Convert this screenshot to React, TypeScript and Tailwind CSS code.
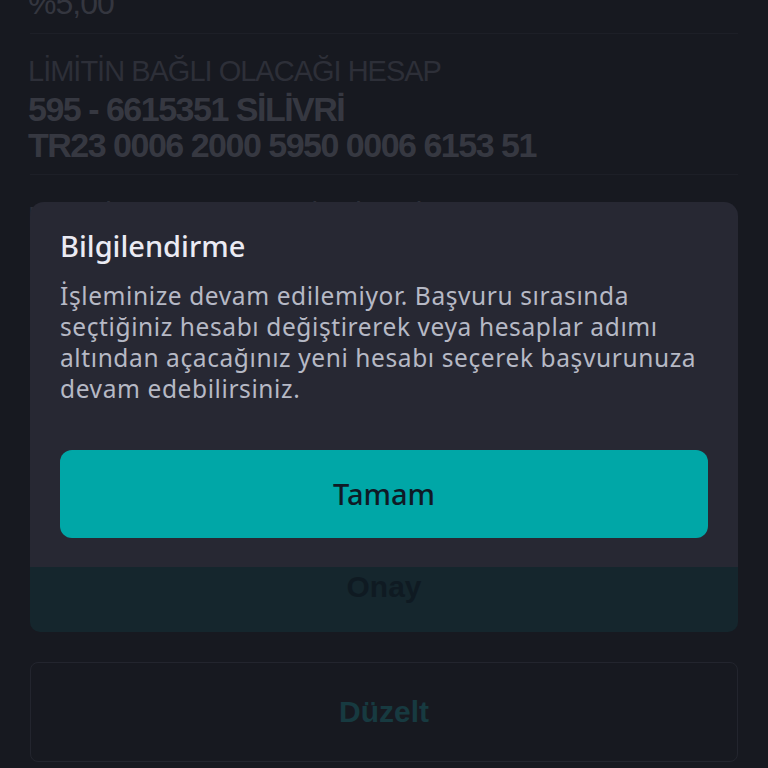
const sans = { fontFamily: '"Liberation Sans", Arial, sans-serif' };

const message = [
  "İşleminize devam edilemiyor. Başvuru sırasında",
  "seçtiğiniz hesabı değiştirerek veya hesaplar adımı",
  "altından açacağınız yeni hesabı seçerek başvurunuza",
  "devam edebilirsiniz.",
];

const Background = () => (
  <div className="flex flex-col px-[28px]" style={sans}>
    <div className="mx-[2px] h-[34px] border-b border-[#1d1f27]">
      <p className="ml-[-2px] mt-[-15px] text-[32px] leading-[36px] tracking-[-1px] text-[#34363f]">%5,00</p>
    </div>
    <div className="mx-[2px] flex flex-col border-b border-[#1d1f27] pt-[20px] pb-[11px]">
      <p className="ml-[-2px] text-[29px] leading-[34px] tracking-[-1px] text-[#2d2f38]">LİMİTİN BAĞLI OLACAĞI HESAP</p>
      <p className="ml-[-2px] mt-[3px] text-[34px] font-bold leading-[36px] tracking-[-1.5px] text-[#363841]">595 - 6615351 SİLİVRİ</p>
      <p className="ml-[-2px] text-[34px] font-bold leading-[36px] tracking-[-1.5px] text-[#363841]">TR23 0006 2000 5950 0006 6153 51</p>
    </div>
    <p className="pt-[25px] text-[29px] leading-[34px] tracking-[-1px] text-[#2d2f38]">KREDİ KARTI ÜRÜN BİLGİLERİ</p>
    <div className="mx-[2px] mt-[305px] flex h-[93px] items-end justify-center rounded-b-[10px] bg-[#15262d] pb-[27px]">
      <span className="text-[30px] font-bold leading-[36px] text-[#0f1a22]">Onay</span>
    </div>
    <div className="mx-[2px] mt-[30px] flex h-[100px] items-center justify-center rounded-[8px] border border-[#23252e]">
      <span className="text-[30px] font-bold leading-[36px] text-[#173a40]">Düzelt</span>
    </div>
  </div>
);

export default function App() {
  return (
    <div className="relative h-[768px] w-full overflow-hidden bg-[#171920]">
      <Background />
      <div
        className="absolute left-[30px] top-[202px] flex h-[365px] w-[708px] flex-col rounded-t-[14px] bg-[#272833] px-[30px] pt-[26px]"
        style={{ fontFamily: '"Noto Sans", "Open Sans", sans-serif' }}
      >
        <h2 className="text-[29px] font-medium leading-[36px] text-[#ebebf3]">Bilgilendirme</h2>
        <p className="mt-[16px] flex flex-col text-[24.5px] leading-[31px] tracking-[0.6px] text-[#b6b9c5]">
          {message.map((line) => (
            <span key={line} className="whitespace-nowrap">
              {line}
            </span>
          ))}
        </p>
        <button className="mt-[46px] flex h-[88px] w-full shrink-0 items-center justify-center rounded-[12px] bg-[#00a7a7] text-[29px] font-medium text-[#0f1a26]">
          Tamam
        </button>
      </div>
    </div>
  );
}
